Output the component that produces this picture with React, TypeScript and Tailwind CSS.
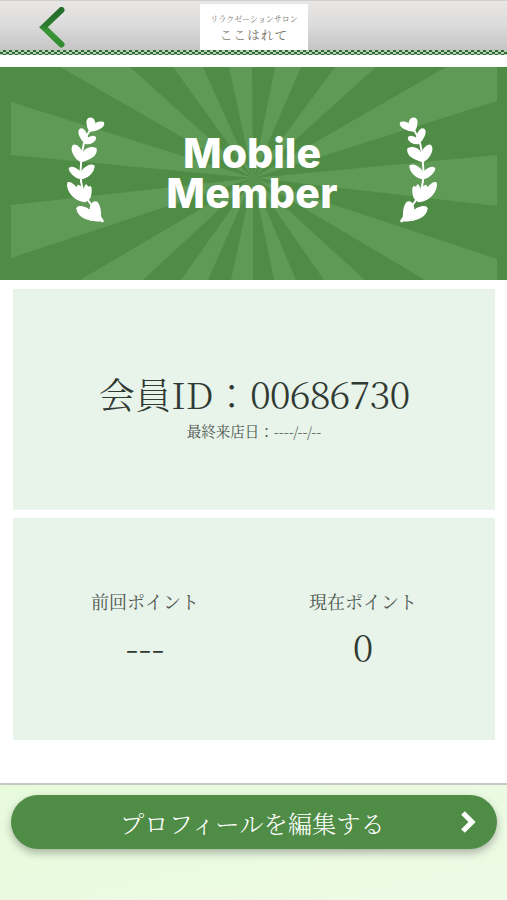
const RAYS = [
  '253,111 11,35 11,88',
  '253,111 11,138 11,191',
  '253,111 60,0 130,0',
  '253,111 173,0 203,0',
  '253,111 229,0 252,0',
  '253,111 275,0 301,0',
  '253,111 335,0 376,0',
  '253,111 446,0 497,0 497,34',
  '253,111 497,88 497,139',
  '253,111 497,192 497,213 425,213',
  '253,111 80,213 143,213',
  '253,111 181,213 208,213',
  '253,111 231,213 253,213',
  '253,111 274,213 296,213',
  '253,111 324,213 365,213',
]

const points = [
  { label: '前回ポイント', value: '---' },
  { label: '現在ポイント', value: '0' },
]

function Laurel({ flip = false }: { flip?: boolean }) {
  return (
    <svg viewBox="0 0 60 120" className={`h-[120px] w-[60px] ${flip ? '-scale-x-100' : ''}`} fill="#fff" stroke="#fff" strokeWidth="1.5" strokeLinejoin="round">
      <path d="M35 20Q27 31 26 54Q24 72 30 86L48 111" fill="none" strokeWidth="2" />
      <path d="M35 21C32 17 31 10 34 8.5C38 7 40 11 39.5 15C42 12 48 11.5 48.5 13C49 17 42 20.5 35 21Z" />
      <path d="M31 33.5C26 30 22.5 22 25 19.5C28 17 32 24 32.5 29C35 26 40 26 40.5 28C40 32 35 34 31 33.5Z" />
      <path d="M26 51.5C19 48 15.5 39 18.5 35.5C23 34 27 42 27.5 45C29.5 38 37 36.5 41 39C42 45 35 49.5 26 51.5Z" />
      <path d="M26 68.5C20 68 14 61 14.5 58.5C17 55.5 24 60 26.5 63.5C28 57 36 54 39 56C38.5 62 33 67.5 26 68.5Z" />
      <path d="M30 91.5C20 91 11.5 81 13 73C15.5 71.5 21 77 23 80Q22 77 23 75.5Q27 77 28 81L31 75L33.5 78C36 74.500 36.500 79 35.500 85Q34.500 89.500 30 91.500Z" />
      <path d="M45.500 110.500C34 111.500 23.500 107 22 98.500C23 95 31 97 35.500 101C35 95 38 90.500 42 92.500C45.500 96 45.500 102 45.500 108L48 111Q48 112.500 45.500 110.500Z" />
    </svg>
  )
}

function Header() {
  return (
    <header className="h-[67px] bg-white">
      <div className="flex h-[50px] items-start bg-linear-to-b from-[#e8e7e6] via-[#dcdbdb] to-[#c6c5c5] border-t border-[#cfcfcf]">
        <div className="w-[200px] pl-[38px] pt-1.5">
          <svg viewBox="0 0 28 42" className="h-[42px] w-7" fill="none">
            <defs>
              <linearGradient id="back" x1="0" y1="0" x2="0" y2="1">
                <stop offset="0" stopColor="#246c2a" />
                <stop offset=".45" stopColor="#2c7d2e" />
                <stop offset=".6" stopColor="#3c9638" />
                <stop offset="1" stopColor="#318a30" />
              </linearGradient>
            </defs>
            <path d="M23.5 3L5.5 20.200L23.500 37.500" stroke="url(#back)" strokeWidth="6" strokeLinecap="round" />
          </svg>
        </div>
        <div className="mt-[3px] flex h-[46px] w-[108px] flex-col items-center bg-white">
          <div className="mt-2 text-[8px] leading-[13px] whitespace-nowrap text-[#77776f]">リラクゼーションサロン</div>
          <div className="mt-0.5 text-[12.5px] leading-4 whitespace-nowrap tracking-[1.2px] text-[#6f6e5e]">ここはれて</div>
        </div>
      </div>
      <div className="h-[5px] bg-[repeating-conic-gradient(#2c6d32_0_25%,#b8cdb5_0_50%)] bg-size-[6px_4px]" />
    </header>
  )
}

function Banner() {
  return (
    <div className="grid h-[213px] bg-[#4f8c45]">
      <svg viewBox="0 0 507 213" className="col-start-1 row-start-1 h-[213px] w-[507px]">
        {RAYS.map(p => <polygon key={p} points={p} fill="#5f9a57" />)}
      </svg>
      <div className="col-start-1 row-start-1 flex justify-between pr-[58px] pl-[55px] pt-[43px]">
        <Laurel />
        <div className="mt-[23px] text-center font-['Inter','Liberation_Sans',sans-serif] text-[41px] leading-10 font-extrabold text-white">
          Mobile<br />
          <span className="tracking-[0.4px]">Member</span>
        </div>
        <Laurel flip />
      </div>
    </div>
  )
}

export default function App() {
  return (
    <div className="flex h-[900px] w-[507px] flex-col overflow-hidden bg-white font-['Noto_Serif_CJK_JP','Noto_Sans_CJK_JP',serif] text-[#303a33]">
      <Header />
      <Banner />
      <main className="flex flex-col gap-2 pr-3 pl-[13px] pt-[9px]">
        <section className="flex h-[221px] flex-col items-center bg-[#e8f3ea] pt-[78px]">
          <div className="text-[36.3px] leading-[52px] font-light whitespace-nowrap">会員ID：<span className="text-[38.5px] tracking-[-0.9px]">00686730</span></div>
          <div className="mt-px text-[14.5px] leading-[22px] whitespace-nowrap text-[#4b554e]">最終来店日：----/--/--</div>
        </section>
        <section className="grid h-[222px] grid-cols-2 bg-[#e8f3ea] px-[23px] pt-[69px] text-center">
          {points.map(p => (
            <div key={p.label}>
              <div className="text-[18px] leading-7 text-[#4b554e]">{p.label}</div>
              <div className="mt-[5px] text-[38px] leading-[52px] font-light">{p.value}</div>
            </div>
          ))}
        </section>
      </main>
      <footer className="mt-auto h-[117px] border-t-2 border-[#c5c8c5] bg-linear-to-br from-[#e7fbdc] to-[#eefae6] px-[11px] pt-[10px]">
        <button className="flex h-[54px] w-[486px] items-center rounded-full bg-[#4f8c45] pl-[108px] text-[24.3px] text-white shadow-[0_4px_8px_rgba(0,0,0,.28)]">
          <span className="mt-0.5 w-[267px] font-light whitespace-nowrap">プロフィールを編集する</span>
          <svg viewBox="0 0 16 24" className="ml-[74px] h-6 w-4" fill="none">
            <path d="M3 3L12 12L3 21" stroke="#fff" strokeWidth="5.2" />
          </svg>
        </button>
      </footer>
    </div>
  )
}
